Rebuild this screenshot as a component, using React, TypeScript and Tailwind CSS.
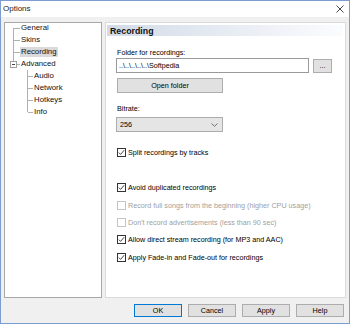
import React from "react";

function Check({ checked, disabled }: { checked?: boolean; disabled?: boolean }) {
  return (
    <div
      className={`w-[9px] h-[9px] border bg-white flex items-center justify-center shrink-0 ${
        disabled ? "border-[#c4c4c4]" : "border-[#333333]"
      }`}
    >
      {checked && (
        <svg width="7" height="7" viewBox="0 0 7 7">
          <polyline points="0.8,3.6 2.6,5.4 6.2,1.2" fill="none" stroke="#333333" strokeWidth="0.9" />
        </svg>
      )}
    </div>
  );
}

function CheckRow({
  label,
  checked,
  disabled,
  mt,
}: {
  label: string;
  checked?: boolean;
  disabled?: boolean;
  mt: string;
}) {
  return (
    <div className={`flex items-center h-[9px] ml-[1px] gap-[2px] ${mt}`}>
      <Check checked={checked} disabled={disabled} />
      <span className={`leading-[9px] whitespace-nowrap ${disabled ? "text-[#a0a0a0]" : "text-black"}`}>{label}</span>
    </div>
  );
}

function Btn({ label, primary, w }: { label: string; primary?: boolean; w: string }) {
  return (
    <div
      className={`${w} h-[13px] flex items-center justify-center bg-[#e1e1e1] border ${
        primary ? "border-[#0078d7]" : "border-[#adadad]"
      }`}
    >
      <span className="leading-[9px]">{label}</span>
    </div>
  );
}

function TreeRow({ label, indent, selected }: { label: string; indent: string; selected?: boolean }) {
  return (
    <div className={`h-[12px] flex items-center ${indent}`}>
      <span className={`leading-[10px] px-[1px] ${selected ? "bg-[#dadada]" : ""}`}>{label}</span>
    </div>
  );
}

export default function App() {
  return (
    <div className="w-[350px] h-[324px] flex flex-col border border-[#7d9cd2] bg-[#f0f0f0] font-['Liberation_Sans',Arial,sans-serif] text-[7.2px] text-black overflow-hidden">
      {/* title bar */}
      <div className="h-[16px] bg-white flex items-center justify-between pl-[2px] pr-[5px] shrink-0">
        <span className="text-[8px] leading-[10px] text-[#222]">Options</span>
        <svg width="8" height="8" viewBox="0 0 8 8">
          <line x1="0.5" y1="0.5" x2="7.5" y2="7.5" stroke="#333" strokeWidth="0.9" />
          <line x1="7.5" y1="0.5" x2="0.5" y2="7.5" stroke="#333" strokeWidth="0.9" />
        </svg>
      </div>

      {/* body */}
      <div className="flex pl-[3px] pr-[3px] pt-[5px] gap-[3px] shrink-0">
        {/* tree */}
        <div className="w-[98px] h-[276px] bg-white border border-[#a8a8a8] relative text-[7.8px] text-[#111]">
          <svg className="absolute left-0 top-0" width="40" height="100" viewBox="0 0 40 100" shapeRendering="crispEdges">
            <g stroke="#b0b0b0" strokeWidth="1">
              <line x1="8.5" y1="5" x2="8.5" y2="38" />
              <line x1="9" y1="5.5" x2="15" y2="5.5" />
              <line x1="9" y1="17.5" x2="15" y2="17.5" />
              <line x1="9" y1="29.5" x2="15" y2="29.5" />
              <line x1="12" y1="41.5" x2="15" y2="41.5" />
              <line x1="22.5" y1="47" x2="22.5" y2="89" />
              <line x1="23" y1="53.5" x2="28" y2="53.5" />
              <line x1="23" y1="65.5" x2="28" y2="65.5" />
              <line x1="23" y1="77.5" x2="28" y2="77.5" />
              <line x1="23" y1="89.5" x2="28" y2="89.5" />
            </g>
            <rect x="5.5" y="38.5" width="6" height="6" fill="white" stroke="#a0a0a0" strokeWidth="1" />
            <line x1="7" y1="41.5" x2="10" y2="41.5" stroke="#444" strokeWidth="1" />
          </svg>
          <div className="mt-[-1px] relative">
            <TreeRow label="General" indent="pl-[15px]" />
            <TreeRow label="Skins" indent="pl-[15px]" />
            <TreeRow label="Recording" indent="pl-[15px]" selected />
            <TreeRow label="Advanced" indent="pl-[15px]" />
            <TreeRow label="Audio" indent="pl-[28px]" />
            <TreeRow label="Network" indent="pl-[28px]" />
            <TreeRow label="Hotkeys" indent="pl-[28px]" />
            <TreeRow label="Info" indent="pl-[28px]" />
          </div>
        </div>

        {/* page */}
        <div className="w-[241px] h-[276px] bg-white border border-[#dadada] flex flex-col">
          <div className="mt-[2px] ml-[1px] mr-[2px] h-[11px] flex items-center pl-[3px] bg-gradient-to-r from-[#d2dbe7] to-[#fbfcfe]">
            <span className="font-bold text-[8.8px] leading-[10px] text-[#111]">Recording</span>
          </div>

          <div className="pl-[10px] flex flex-col">
            <div className="mt-[12px] h-[9px] leading-[9px] ml-[1px]">Folder for recordings:</div>
            <div className="mt-[1px] flex items-center">
              <div className="w-[193px] h-[15px] border border-[#9a9a9a] bg-white flex items-center pl-[2px]">
                <span className="leading-[9px]">..\..\..\..\..\Softpedia</span>
              </div>
              <div className="ml-[4px] w-[19px] h-[14px] bg-[#e1e1e1] border border-[#adadad] flex items-center justify-center">
                <span className="leading-[9px]">...</span>
              </div>
            </div>
            <div className="mt-[5px] ml-[1px] w-[106px] h-[15px] bg-[#e1e1e1] border border-[#adadad] flex items-center justify-center">
              <span className="leading-[9px]">Open folder</span>
            </div>

            <div className="mt-[11px] h-[9px] leading-[9px] ml-[1px]">Bitrate:</div>
            <div className="mt-[4px] w-[107px] h-[15px] bg-[#e5e5e5] border border-[#acacac] flex items-center justify-between pl-[3px] pr-[4px]">
              <span className="leading-[9px]">256</span>
              <svg width="7" height="4" viewBox="0 0 7 4">
                <polyline points="0.5,0.5 3.5,3.3 6.5,0.5" fill="none" stroke="#555" strokeWidth="0.8" />
              </svg>
            </div>

            <CheckRow label="Split recordings by tracks" checked mt="mt-[16px]" />
            <CheckRow label="Avoid duplicated recordings" checked mt="mt-[26px]" />
            <CheckRow label="Record full songs from the beginning (higher CPU usage)" disabled mt="mt-[9px]" />
            <CheckRow label="Don't record advertisements (less than 90 sec)" disabled mt="mt-[8px]" />
            <CheckRow label="Allow direct stream recording (for MP3 and AAC)" checked mt="mt-[8px]" />
            <CheckRow label="Apply Fade-in and Fade-out for recordings" checked mt="mt-[9px]" />
          </div>
        </div>
      </div>

      {/* buttons */}
      <div className="mt-[6px] flex justify-end gap-[6px] pr-[5px]">
        <Btn label="OK" primary w="w-[48px]" />
        <Btn label="Cancel" w="w-[48px]" />
        <Btn label="Apply" w="w-[48px]" />
        <Btn label="Help" w="w-[48px]" />
      </div>
    </div>
  );
}
